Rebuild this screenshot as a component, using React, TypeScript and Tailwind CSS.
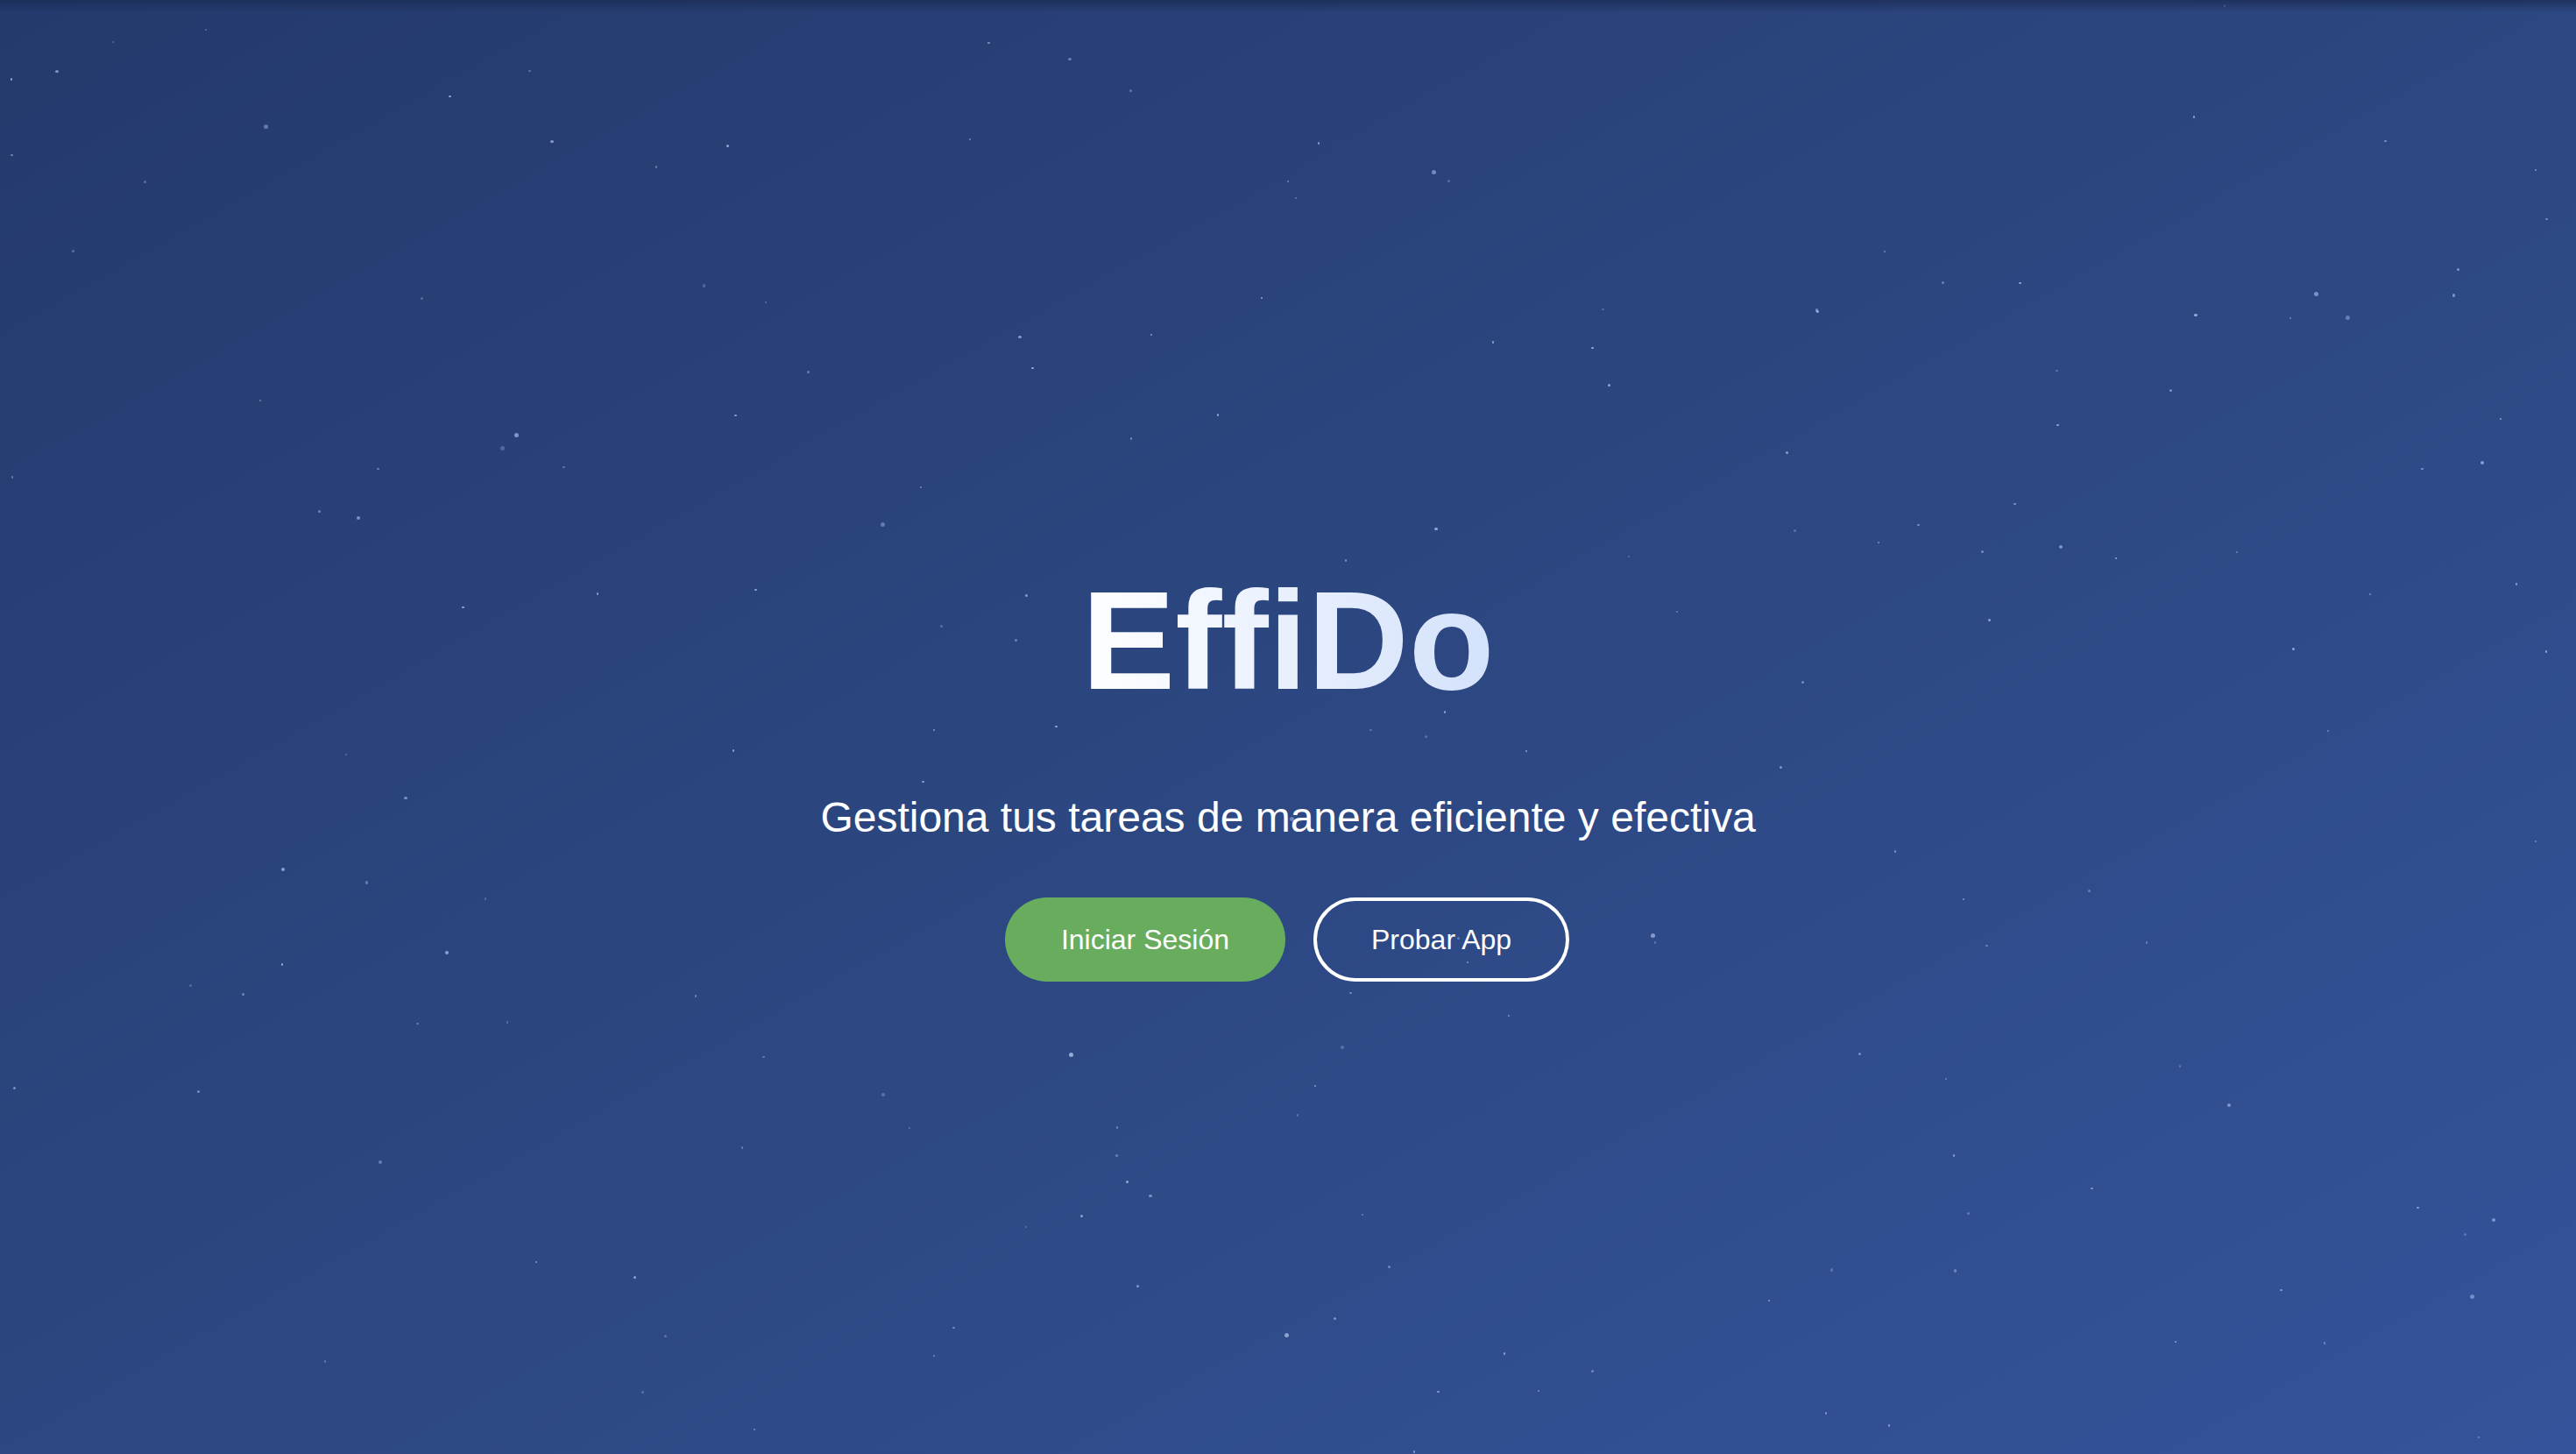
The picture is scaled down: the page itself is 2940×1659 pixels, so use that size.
import React from "react";

function makeStars() {
  let s = 1234567;
  const rnd = () => {
    s = (s * 1103515245 + 12345) % 2147483648;
    return s / 2147483648;
  };
  const stars: { x: number; y: number; r: number; o: number }[] = [];
  for (let i = 0; i < 190; i++) {
    const big = rnd();
    stars.push({
      x: rnd() * 100,
      y: rnd() * 100,
      r: big > 0.94 ? 5 : big > 0.75 ? 3.5 : 2.5,
      o: 0.3 + rnd() * 0.45,
    });
  }
  return stars;
}

const STARS = makeStars();

export default function App() {
  return (
    <div
      className="relative min-h-screen w-full overflow-hidden bg-gradient-to-br from-[#243a6d] via-[#2c4781] to-[#34539a]"
      style={{ fontFamily: '"Liberation Sans", Arial, Helvetica, sans-serif' }}
    >
      <div className="pointer-events-none absolute inset-0">
        {STARS.map((st, i) => (
          <div
            key={i}
            className="absolute rounded-full bg-[#b8c9f5]"
            style={{
              left: `${st.x}%`,
              top: `${st.y}%`,
              width: st.r,
              height: st.r,
              opacity: st.o,
            }}
          />
        ))}
      </div>
      <div className="pointer-events-none absolute left-0 right-0 top-0 h-[14px] bg-gradient-to-b from-[#1c2d55]/80 to-transparent" />

      <div className="relative flex min-h-screen flex-col items-center justify-center pt-[112px]">
        <h1 className="bg-gradient-to-r from-white to-[#d3e1fb] bg-clip-text text-[160px] font-bold leading-none text-transparent">
          EffiDo
        </h1>
        <p className="mt-[86px] text-[48px] leading-[72px] text-white">
          Gestiona tus tareas de manera eficiente y efectiva
        </p>
        <div className="mt-[55px] flex gap-[32px] pr-[2px]">
          <button className="flex h-[96px] items-center rounded-full bg-[#68ad5d] px-[64px] text-[32px] text-white">
            Iniciar Sesión
          </button>
          <button className="flex h-[96px] items-center rounded-full border-[4px] border-white px-[62px] text-[32px] text-white">
            Probar App
          </button>
        </div>
      </div>
    </div>
  );
}
